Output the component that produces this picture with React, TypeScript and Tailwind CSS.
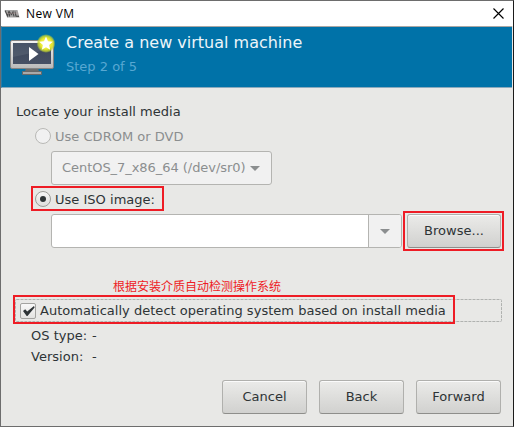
import React from "react";

function Arrow({ className = "" }: { className?: string }) {
  return (
    <svg className={className} width="10" height="5" viewBox="0 0 10 5">
      <path d="M0 0H10L5 5Z" fill="#8b8e8f" />
    </svg>
  );
}

function Highlight({ className }: { className: string }) {
  return <span className={"pointer-events-none absolute border-2 border-[#ee1c25] " + className} />;
}

function PushButton({ label, className }: { label: string; className: string }) {
  return (
    <button
      className={
        "h-[34px] rounded-[3px] border border-[#b0b0ad] border-b-[#8e8e8b] bg-linear-to-b from-[#ebebe9] to-[#d1d1cf] pb-px text-center text-[#2e3436] shadow-[inset_0_1px_0_#fbfbfb] " +
        className
      }
    >
      {label}
    </button>
  );
}

function AppIcon() {
  return (
    <svg width="16" height="10" viewBox="0 0 16 10">
      <path d="M1 1L13.5 1L15.5 8.5L3 8.5Z" fill="#a3a3a3" />
      <path d="M1 1.5L3.5 7L5 2.2M5.5 7.5V3L7.5 5.5L9 3L10 7.5M11 2.5L12 7.2L15 7.4" fill="none" stroke="#4a4a4a" strokeWidth="1.1" />
      <path d="M3 4.5L14 4" stroke="#b8a0a0" strokeWidth="0.5" />
    </svg>
  );
}

function MonitorIcon() {
  return (
    <svg width="48" height="48" viewBox="0 0 48 48">
      <defs>
        <linearGradient id="screen" x1="0" y1="0" x2="0" y2="1">
          <stop offset="0" stopColor="#354158" />
          <stop offset="0.5" stopColor="#414b5f" />
          <stop offset="1" stopColor="#465064" />
        </linearGradient>
        <linearGradient id="frame" x1="0" y1="0" x2="0" y2="1">
          <stop offset="0" stopColor="#f4f4f4" />
          <stop offset="1" stopColor="#b9b9b9" />
        </linearGradient>
        <radialGradient id="glow">
          <stop offset="0" stopColor="#fffb9e" />
          <stop offset="0.6" stopColor="#e8e829" />
          <stop offset="0.82" stopColor="#c4d432" stopOpacity="0.8" />
          <stop offset="1" stopColor="#b0ca30" stopOpacity="0" />
        </radialGradient>
      </defs>
      <path d="M18 34H30L31 39H17Z" fill="#6c6c6c" />
      <path d="M14.5 38.5H33.5V41.5H14.5Z" fill="#a9a9a9" stroke="#686868" />
      <rect x="2.5" y="7.5" width="43" height="28" rx="1.5" fill="url(#frame)" stroke="#838383" />
      <rect x="5" y="10" width="38" height="21" fill="url(#screen)" />
      <path d="M5 10H43V16L5 24Z" fill="#6a7584" opacity="0.35" />
      <path d="M21 14L30.5 21L21 28Z" fill="#fff" />
      <circle cx="38" cy="10.5" r="9.5" fill="url(#glow)" />
      <path d="M38 3.6L40 8.2L44.8 8.7L41.1 12L42.2 16.7L38 14.3L33.8 16.7L34.9 12L31.2 8.7L36 8.2Z" fill="#fff" />
    </svg>
  );
}

export default function App() {
  return (
    <div className="flex h-[427px] w-[514px] flex-col border border-[#6d6d6d] border-r-[#1b1b1b] bg-[#e8e8e6] font-['DejaVu_Sans',sans-serif] text-[13px] leading-4 text-[#2e3436]">
      <header className="flex h-[25px] shrink-0 items-center bg-white pl-[3px] pr-[9px] text-black">
        <AppIcon />
        <span className="ml-[6px] flex-1 font-['Open_Sans',sans-serif] text-[12px] tracking-[0.4px]">New VM</span>
        <svg width="11" height="11" viewBox="0 0 11 11">
          <path d="M0.5 0.5L10.5 10.5M10.5 0.5L0.5 10.5" fill="none" stroke="#000" strokeWidth="1.15" />
        </svg>
      </header>
      <section className="mr-px flex h-[62px] shrink-0 border-y border-t-[#aaa7a4] border-b-[#8aaabd] border-l border-l-[#267ba9] bg-[#0072a8] pl-[6px] pt-[6px]">
        <MonitorIcon />
        <div className="ml-[10px]">
          <h1 className="text-[16px] leading-[20px] text-[#edf5f9]">Create a new virtual machine</h1>
          <p className="mt-[6px] text-[#58a8d2]">Step 2 of 5</p>
        </div>
      </section>

      <main className="flex flex-1 flex-col pl-[15px] pt-4 tracking-[0.02px]">
        <p>Locate your install media</p>
        <label className="ml-[19px] mt-[7px] flex h-[18px] items-center text-[#8b8e8f]">
          <span className="mr-[4px] h-4 w-4 rounded-full border border-[#b9b9b6] bg-[#f1f1f1]" />
          <span className="pt-[2px]">Use CDROM or DVD</span>
        </label>
        <div className="ml-[35px] mt-[6px] flex h-[34px] w-[221px] items-center justify-between rounded-[3px] border border-[#b4b4b1] bg-[#f1f1f1] pl-[10px] pr-[11px] text-[#8b8e8f]">
          <span className="whitespace-nowrap tracking-[-0.05px]">CentOS_7_x86_64 (/dev/sr0)</span>
          <Arrow />
        </div>
        <label className="relative ml-[15px] mt-px flex h-[25px] w-[133px] items-center pl-1">
          <span className="mr-[4px] flex h-4 w-4 items-center justify-center rounded-full border border-[#9c9c98] bg-linear-to-b from-[#f6f6f6] to-[#dededc]">
            <span className="h-[6px] w-[6px] rounded-full bg-[#2e3436]" />
          </span>
          <span className="pt-[2px]">Use ISO image:</span>
          <Highlight className="inset-0" />
        </label>
        <div className="ml-[35px] mt-[3px] flex h-[34px]">
          <div className="flex w-[351px] overflow-hidden rounded-[3px] border border-[#b4b4b1] bg-white">
            <div className="flex-1" />
            <div className="flex w-[33px] items-center justify-center border-l border-[#b4b4b1] bg-[#f1f1f1]">
              <Arrow />
            </div>
          </div>
          <div className="relative ml-[5px]">
            <PushButton label="Browse..." className="w-[94px]" />
            <Highlight className="-left-1 -top-[3px] h-10 w-[101px]" />
          </div>
        </div>

        <p className="ml-[97px] mt-[30px] h-4 whitespace-nowrap font-['Noto_Sans_CJK_SC',sans-serif] text-[12px] tracking-normal text-[#ee1c25]">根据安装介质自动检测操作系统</p>
        <label className="relative -ml-px mt-[5px] flex h-[23px] w-[487px] items-center pl-[5px]">
          <svg className="absolute inset-0" width="487" height="23">
            <rect x="0.5" y="0.5" width="486" height="22" rx="1" fill="none" stroke="#b0b2b0" strokeDasharray="3 1" />
          </svg>
          <span className="relative mr-1 flex h-4 w-4 items-center justify-center rounded-[2px] border border-[#a3a3a0] bg-linear-to-b from-[#f8f8f8] to-[#e3e3e1]">
            <svg className="shrink-0" width="14" height="14" viewBox="0 0 14 14">
              <path d="M2 7L4.2 5.3L6.2 7.5L13 2L13.6 3.6L6.5 12H5.7Z" fill="#2e3436" />
            </svg>
          </span>
          <span className="relative whitespace-nowrap">Automatically detect operating system based on install media</span>
          <Highlight className="-left-[2px] -top-1 h-[29px] w-[442px]" />
        </label>
        <div className="ml-[15px] mt-[6px] grid grid-cols-[61px_auto] gap-y-[5px]">
          <span>OS type:</span><span>-</span>
          <span>Version:</span><span>-</span>
        </div>
        <footer className="ml-[206px] mt-[15px] flex gap-3">
          <PushButton label="Cancel" className="w-[85px]" />
          <PushButton label="Back" className="w-[85px]" />
          <PushButton label="Forward" className="w-[85px]" />
        </footer>
      </main>
    </div>
  );
}
